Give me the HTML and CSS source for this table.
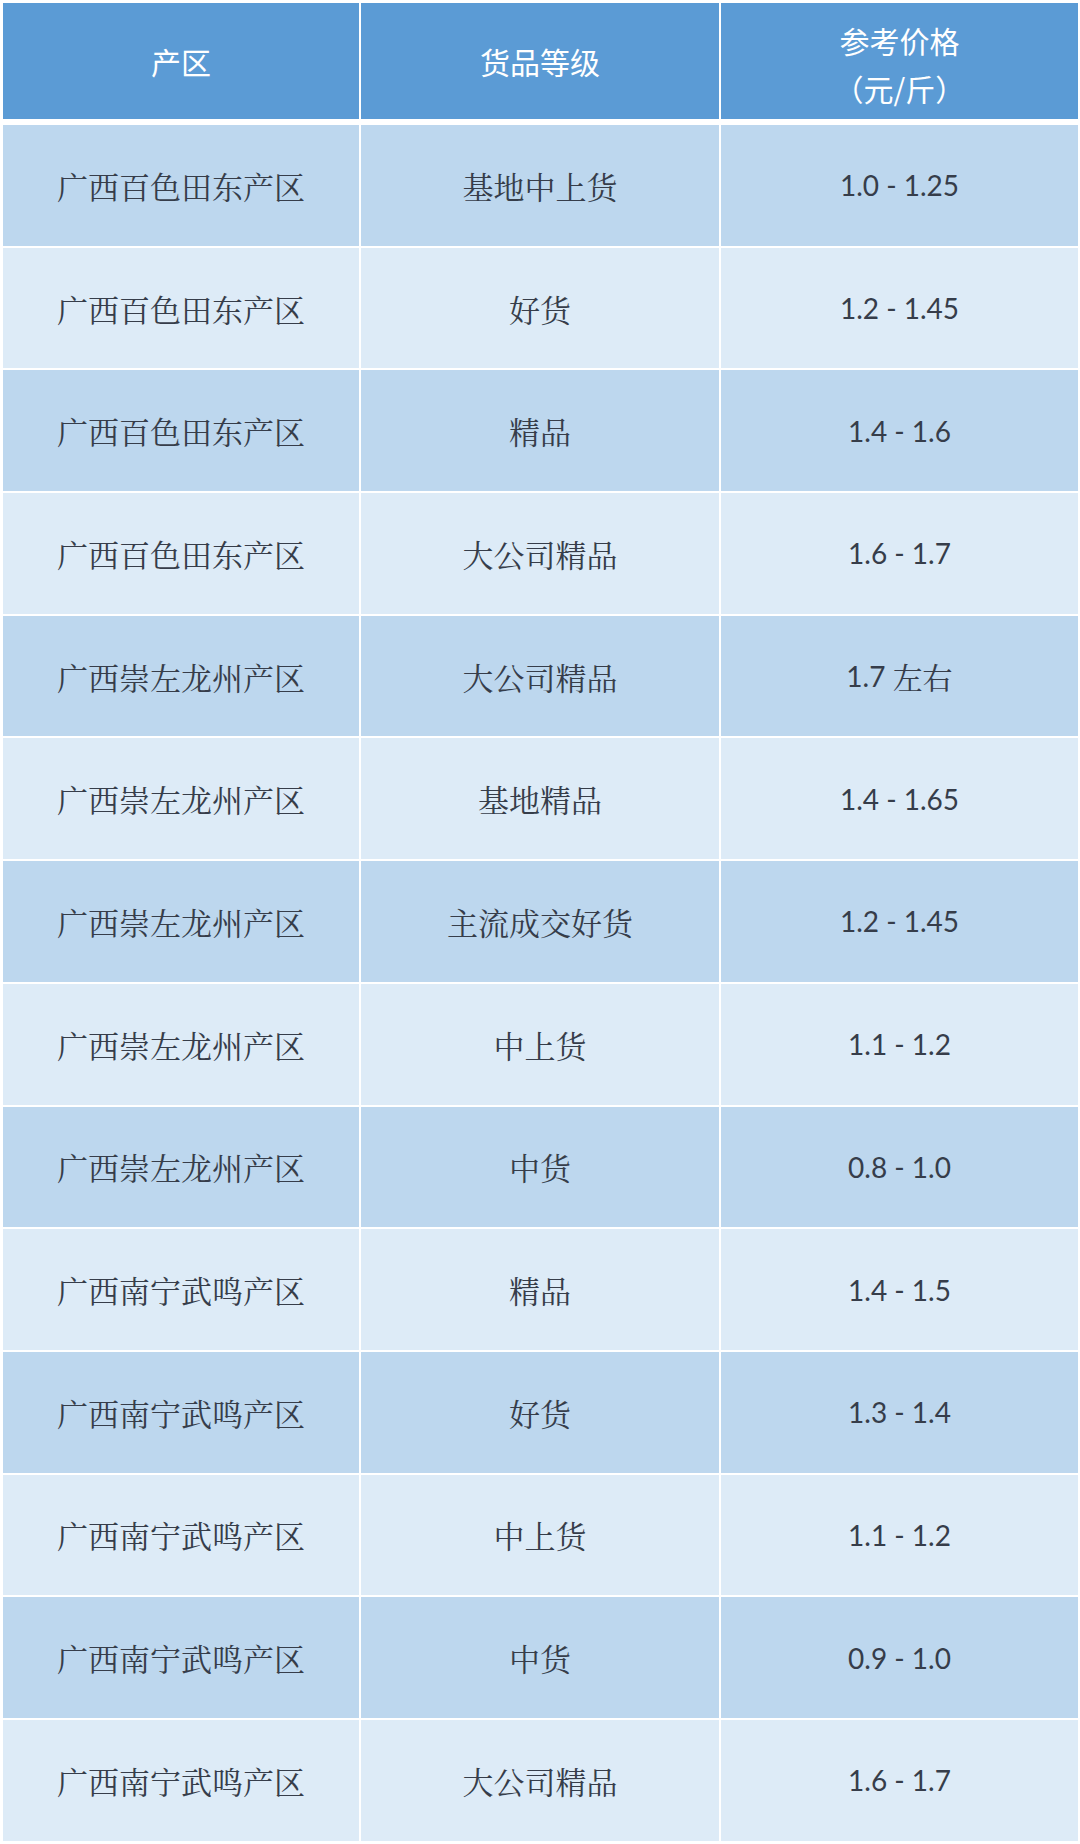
FILE: index.html
```html
<!DOCTYPE html>
<html lang="zh-CN">
<head>
<meta charset="utf-8">
<title>价格表</title>
<link rel="stylesheet" href="styles.css">
</head>
<body>
<div class="table">
  <div class="row head">
    <div class="cell">产区</div>
    <div class="cell">货品等级</div>
    <div class="cell two">参考价格<br>（元/斤）</div>
  </div>
  <div class="row odd"><div class="cell">广西百色田东产区</div><div class="cell">基地中上货</div><div class="cell num">1.0 - 1.25</div></div>
  <div class="row even"><div class="cell">广西百色田东产区</div><div class="cell">好货</div><div class="cell num">1.2 - 1.45</div></div>
  <div class="row odd"><div class="cell">广西百色田东产区</div><div class="cell">精品</div><div class="cell num">1.4 - 1.6</div></div>
  <div class="row even"><div class="cell">广西百色田东产区</div><div class="cell">大公司精品</div><div class="cell num">1.6 - 1.7</div></div>
  <div class="row odd"><div class="cell">广西崇左龙州产区</div><div class="cell">大公司精品</div><div class="cell num">1.7 <span class="cjk">左右</span></div></div>
  <div class="row even"><div class="cell">广西崇左龙州产区</div><div class="cell">基地精品</div><div class="cell num">1.4 - 1.65</div></div>
  <div class="row odd"><div class="cell">广西崇左龙州产区</div><div class="cell">主流成交好货</div><div class="cell num">1.2 - 1.45</div></div>
  <div class="row even"><div class="cell">广西崇左龙州产区</div><div class="cell">中上货</div><div class="cell num">1.1 - 1.2</div></div>
  <div class="row odd"><div class="cell">广西崇左龙州产区</div><div class="cell">中货</div><div class="cell num">0.8 - 1.0</div></div>
  <div class="row even"><div class="cell">广西南宁武鸣产区</div><div class="cell">精品</div><div class="cell num">1.4 - 1.5</div></div>
  <div class="row odd"><div class="cell">广西南宁武鸣产区</div><div class="cell">好货</div><div class="cell num">1.3 - 1.4</div></div>
  <div class="row even"><div class="cell">广西南宁武鸣产区</div><div class="cell">中上货</div><div class="cell num">1.1 - 1.2</div></div>
  <div class="row odd"><div class="cell">广西南宁武鸣产区</div><div class="cell">中货</div><div class="cell num">0.9 - 1.0</div></div>
  <div class="row even"><div class="cell">广西南宁武鸣产区</div><div class="cell">大公司精品</div><div class="cell num">1.6 - 1.7</div></div>
</div>
</body>
</html>
```
FILE: styles.css
```css
html, body {
  margin: 0;
  padding: 0;
  background: #ffffff;
}
body {
  width: 1080px;
  height: 1844px;
  overflow: hidden;
}
.table {
  padding: 3px 2px 0 3px;
  display: flex;
  flex-direction: column;
  gap: 2px;
  font-family: Lato, "Noto Serif CJK SC", "Noto Sans CJK SC", serif;
  font-size: 31px;
  color: #363d4a;
}
.row {
  display: grid;
  grid-template-columns: 356px 358px 357px;
  column-gap: 2px;
  height: 120.7px;
}
.row.head {
  height: 116px;
  margin-bottom: 4px;
  color: #ffffff;
  font-family: "Noto Sans CJK SC", sans-serif;
  font-size: 30px;
}
.head .cell {
  background: #5b9bd5;
}
.head .two {
  line-height: 48px;
  padding-top: 6px;
  box-sizing: border-box;
}
.cell {
  display: flex;
  align-items: center;
  justify-content: center;
  text-align: center;
  white-space: pre;
}
.num {
  font-size: 28px;
}
.cjk {
  font-size: 30px;
}
.odd .cell {
  background: #bdd7ee;
}
.even .cell {
  background: #ddebf7;
}
```
